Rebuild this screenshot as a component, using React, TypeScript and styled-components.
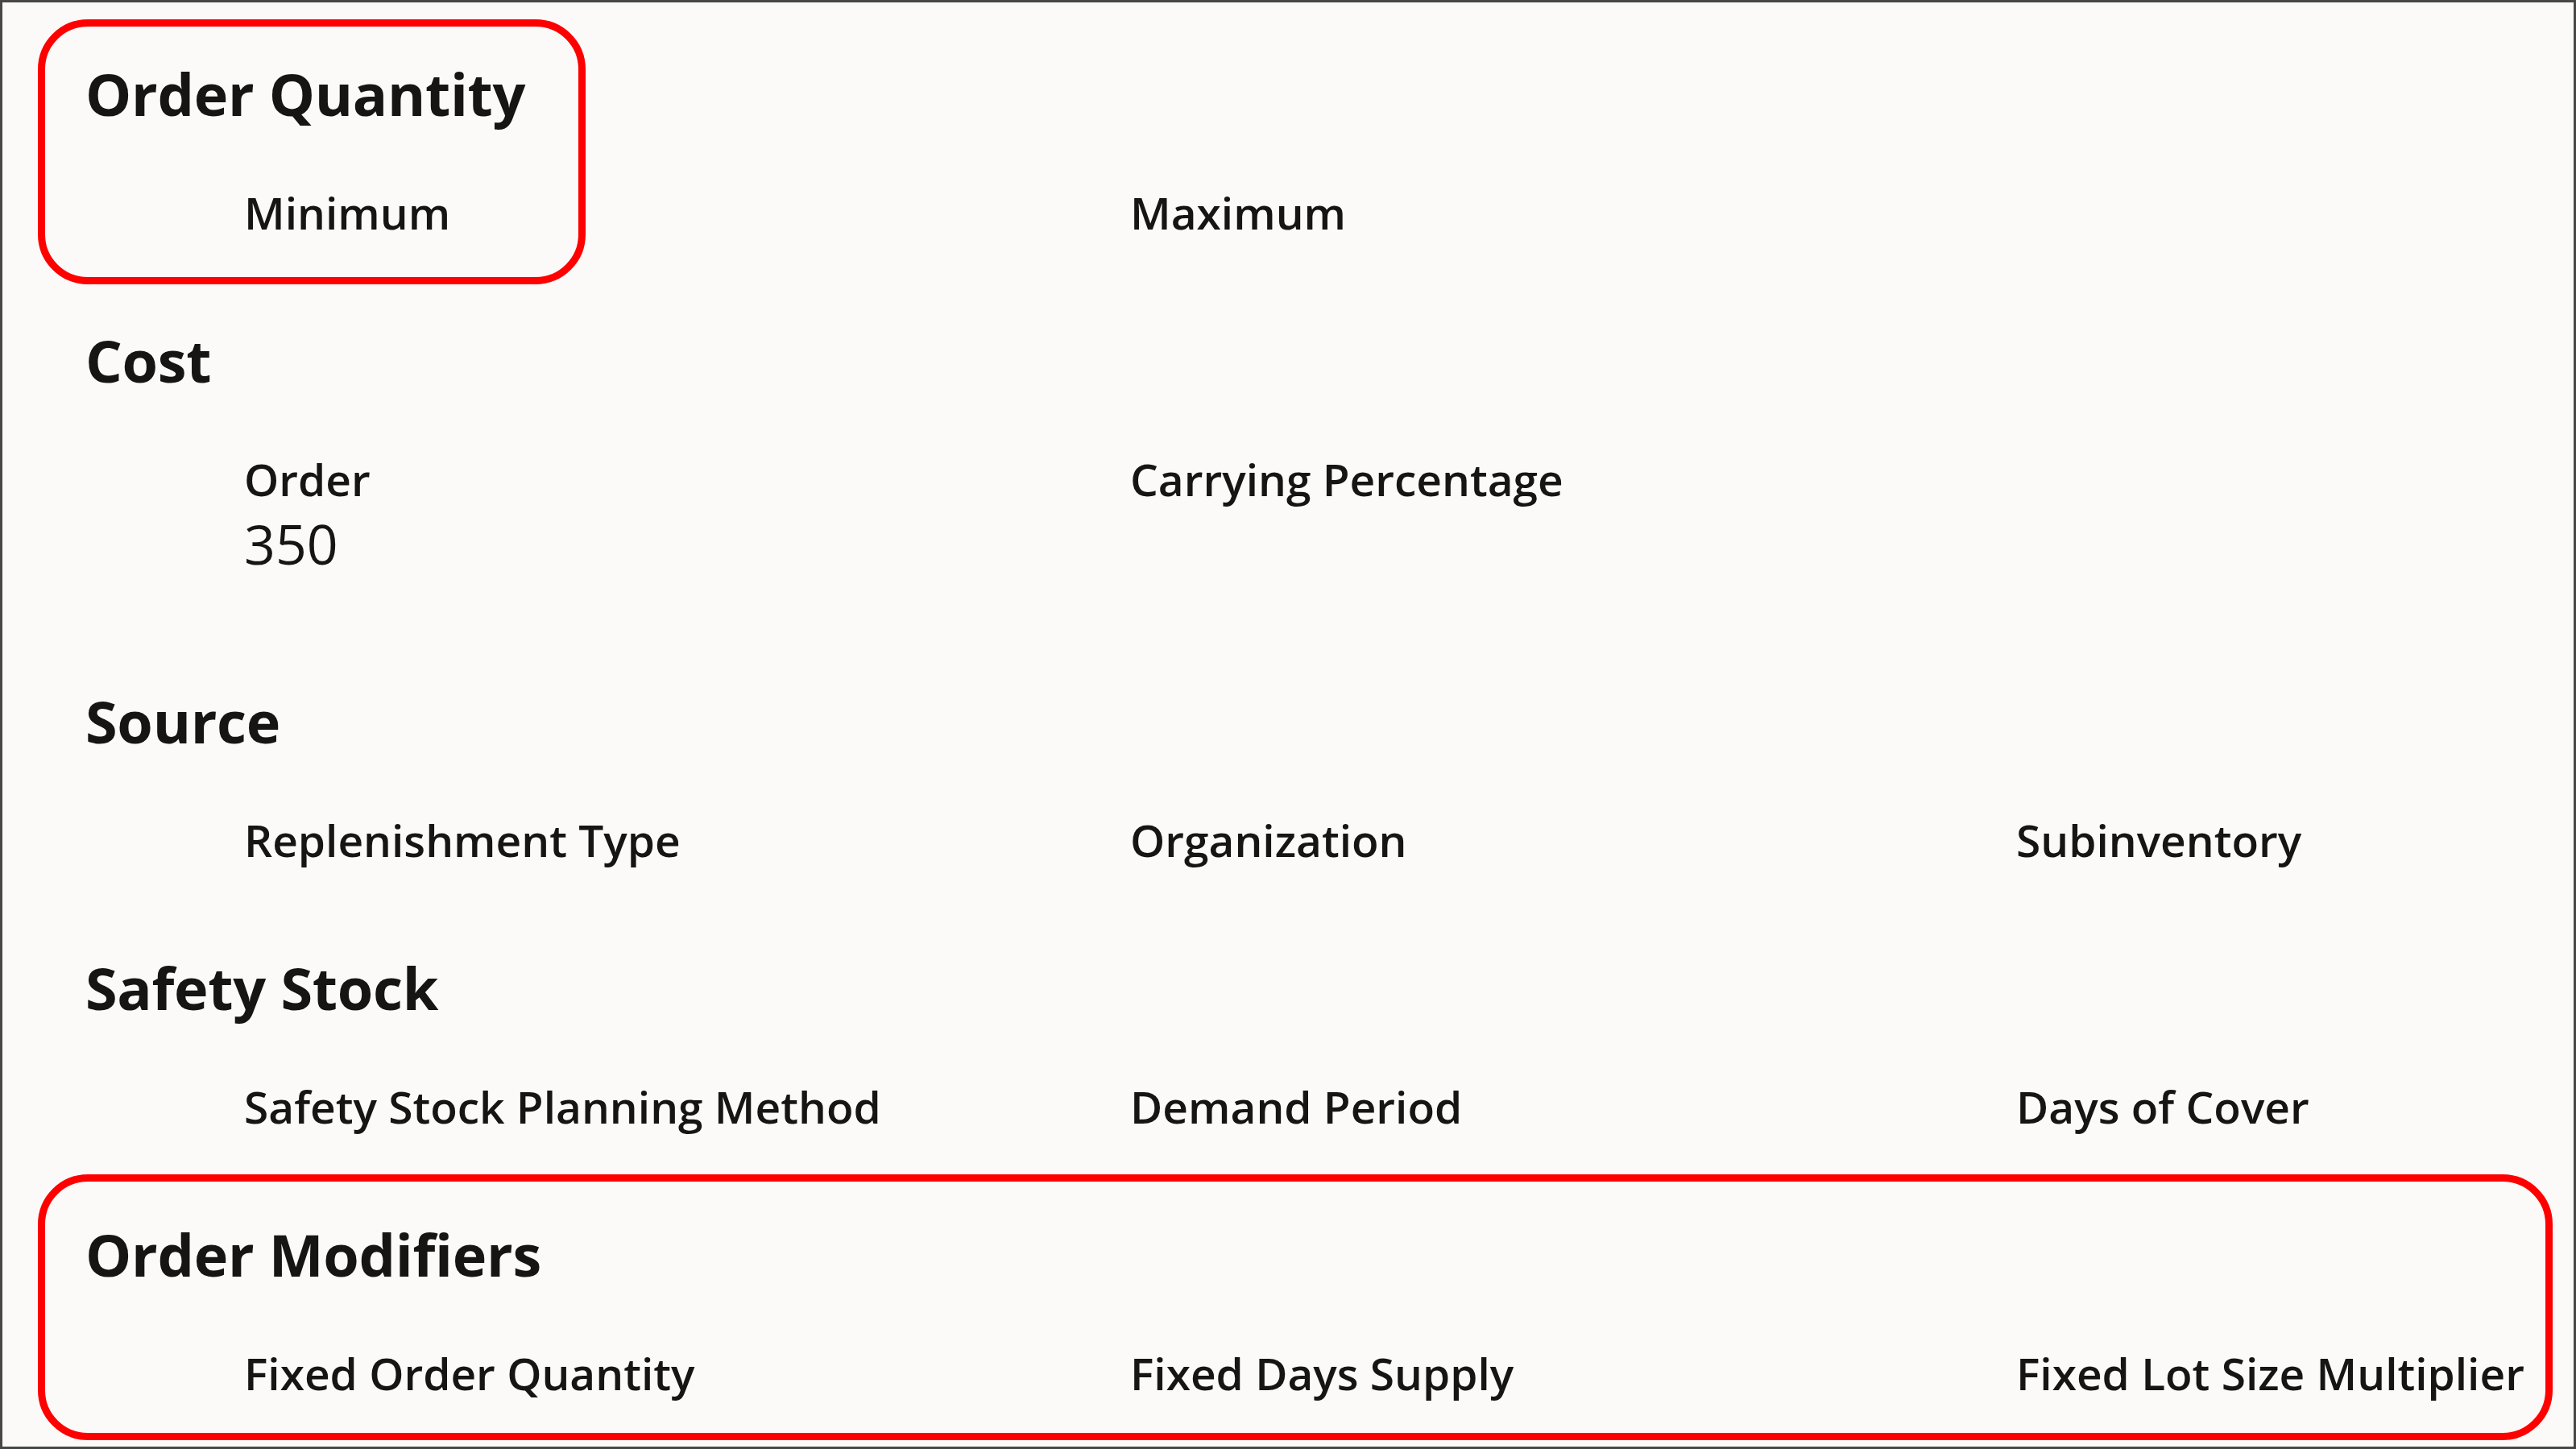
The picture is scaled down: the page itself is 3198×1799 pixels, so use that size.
import React from "react";
import styled, { createGlobalStyle } from "styled-components";

const GlobalStyle = createGlobalStyle`
  html, body {
    margin: 0;
    padding: 0;
    background: #fbfaf8;
  }
  body {
    font-family: "Open Sans", "Noto Sans", "Liberation Sans", sans-serif;
    color: #161513;
  }
`;

const Frame = styled.div`
  box-sizing: border-box;
  width: 3198px;
  height: 1799px;
  border: 3px solid #474747;
  background: #fbfaf8;
  padding: 65px 0 0 103px;
  overflow: hidden;
`;

const Section = styled.section`
  position: relative;
  margin-bottom: 97px;
`;

const Heading = styled.h2`
  margin: 0;
  font-size: 72px;
  line-height: 96px;
  font-weight: 700;
  color: #161513;
  letter-spacing: -0.3px;
`;

const FieldGrid = styled.div`
  display: grid;
  grid-template-columns: 1100px 1100px 1fr;
  margin-top: 62px;
  padding-left: 197px;
`;

const Field = styled.div`
  display: flex;
  flex-direction: column;
`;

const Label = styled.span`
  font-size: 55px;
  line-height: 76px;
  font-weight: 600;
  color: #161513;
  white-space: nowrap;
`;

const Value = styled.span`
  font-size: 68px;
  line-height: 80px;
  font-weight: 400;
  color: #161513;
  margin-top: 2px;
  margin-bottom: 35px;
`;

const Highlight = styled.div<{ $top: number; $left: number; $w: number; $h: number }>`
  position: absolute;
  top: ${(p) => p.$top}px;
  left: ${(p) => p.$left}px;
  width: ${(p) => p.$w}px;
  height: ${(p) => p.$h}px;
  box-sizing: border-box;
  border: 9px solid #ff0000;
  border-radius: 62px;
  pointer-events: none;
`;

type FieldData = { label: string; value?: string };
type SectionData = {
  title: string;
  fields: FieldData[];
  highlight?: { top: number; left: number; w: number; h: number };
};

const sections: SectionData[] = [
  {
    title: "Order Quantity",
    fields: [{ label: "Minimum" }, { label: "Maximum" }],
    highlight: { top: -44, left: -59, w: 680, h: 329 },
  },
  {
    title: "Cost",
    fields: [{ label: "Order", value: "350" }, { label: "Carrying Percentage" }],
  },
  {
    title: "Source",
    fields: [
      { label: "Replenishment Type" },
      { label: "Organization" },
      { label: "Subinventory" },
    ],
  },
  {
    title: "Safety Stock",
    fields: [
      { label: "Safety Stock Planning Method" },
      { label: "Demand Period" },
      { label: "Days of Cover" },
    ],
  },
  {
    title: "Order Modifiers",
    fields: [
      { label: "Fixed Order Quantity" },
      { label: "Fixed Days Supply" },
      { label: "Fixed Lot Size Multiplier" },
    ],
    highlight: { top: -51, left: -59, w: 3122, h: 330 },
  },
];

export default function App() {
  return (
    <>
      <GlobalStyle />
      <Frame>
        {sections.map((s) => (
          <Section key={s.title}>
            {s.highlight && (
              <Highlight
                $top={s.highlight.top}
                $left={s.highlight.left}
                $w={s.highlight.w}
                $h={s.highlight.h}
              />
            )}
            <Heading>{s.title}</Heading>
            <FieldGrid>
              {s.fields.map((f) => (
                <Field key={f.label}>
                  <Label>{f.label}</Label>
                  {f.value && <Value>{f.value}</Value>}
                </Field>
              ))}
            </FieldGrid>
          </Section>
        ))}
      </Frame>
    </>
  );
}
